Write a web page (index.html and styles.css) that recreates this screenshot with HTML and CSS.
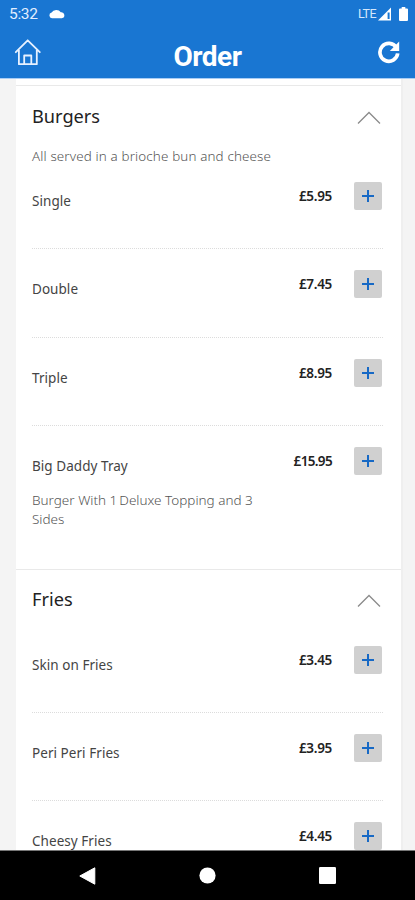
FILE: index.html
```html
<!DOCTYPE html>
<html lang="en">
<head>
<meta charset="utf-8">
<title>Order</title>
<link rel="stylesheet" href="styles.css">
</head>
<body>
<header class="header">
  <div class="status">
    <span class="time">5:32</span>
    <svg class="cloud" width="16" height="10" viewBox="0 0 16 10"><path d="M3 9.2A2.9 2.9 0 0 1 2.6 3.5A5.2 4.6 0 0 1 11.8 3.2A3 3 0 0 1 12.8 9.2Z" fill="#fff"/></svg>
    <span class="lte">LTE</span>
    <svg class="signal" width="14" height="14" viewBox="0 0 14 14"><path d="M0 13.5L13 .5V13.5Z" fill="#fff"/><path d="M9.6 5.5H11.6V12H9.6Z" fill="#1976d2"/></svg>
    <svg class="battery" width="9" height="14" viewBox="0 0 9 14"><path d="M2.7 0H6.3V1.5H8Q9 1.5 9 2.5V13Q9 14 8 14H1Q0 14 0 13V2.5Q0 1.5 1 1.5H2.7Z" fill="#fff"/></svg>
  </div>
  <div class="toolbar">
    <svg class="home" width="28" height="28" viewBox="0 0 28 28" fill="none" stroke="#e7f1ff" stroke-width="1.8" stroke-linejoin="round" stroke-linecap="round"><path d="M1.8 14.2L13.7 2.3L25.8 14.2M4.9 12V26.2H22.8V12M10.2 26V17.5H17.3V26"/></svg>
    <h1 class="title">Order</h1>
    <svg class="refresh" width="24" height="24" viewBox="0 0 24 24"><path d="M19.4 7.6A8.9 8.9 0 1 0 20.7 13.4" fill="none" stroke="#fff" stroke-width="3.7"/><path d="M22.2 1.6V11H12.8Z" fill="#fff"/></svg>
  </div>
</header>
<main class="menu">
  <section class="section">
    <div class="section-head"><h2>Burgers</h2><svg class="chevron" width="24" height="14" viewBox="0 0 24 14"><path d="M1 12.5L12 1.5L23 12.5"/></svg></div>
    <p class="intro">All served in a brioche bun and cheese</p>
    <article class="item"><div class="info"><h3>Single</h3></div><span class="price">£5.95</span><button class="add" aria-label="Add"></button></article>
    <article class="item"><div class="info"><h3>Double</h3></div><span class="price">£7.45</span><button class="add" aria-label="Add"></button></article>
    <article class="item"><div class="info"><h3>Triple</h3></div><span class="price">£8.95</span><button class="add" aria-label="Add"></button></article>
    <article class="item tall"><div class="info"><h3>Big Daddy Tray</h3><p class="detail"><span class="detail-line">Burger With <span class="one">1</span> Deluxe Topping and 3</span> Sides</p></div><span class="price wide">£15.95</span><button class="add" aria-label="Add"></button></article>
  </section>
  <section class="section">
    <div class="section-head"><h2>Fries</h2><svg class="chevron" width="24" height="14" viewBox="0 0 24 14"><path d="M1 12.5L12 1.5L23 12.5"/></svg></div>
    <article class="item"><div class="info"><h3>Skin on Fries</h3></div><span class="price">£3.45</span><button class="add" aria-label="Add"></button></article>
    <article class="item"><div class="info"><h3>Peri Peri Fries</h3></div><span class="price">£3.95</span><button class="add" aria-label="Add"></button></article>
    <article class="item"><div class="info"><h3>Cheesy Fries</h3></div><span class="price">£4.45</span><button class="add" aria-label="Add"></button></article>
  </section>
</main>
<nav class="navbar">
  <svg width="17" height="18" viewBox="0 0 17 18"><path d="M.8 9L15.8 .8V17.2Z" fill="#fff" stroke="#fff" stroke-linejoin="round"/></svg>
  <svg width="17" height="17" viewBox="0 0 17 17"><circle cx="8.5" cy="8.5" r="8.1" fill="#fff"/></svg>
  <svg width="17" height="17" viewBox="0 0 17 17"><rect width="17" height="17" rx="1.3" fill="#fff"/></svg>
</nav>
</body>
</html>
```
FILE: styles.css
```css
* { box-sizing: border-box; margin: 0; padding: 0; }
body { width: 415px; height: 900px; overflow: hidden; display: flex; flex-direction: column; background: #f4f4f4; font-family: "Noto Sans", sans-serif; }
svg { display: block; flex: none; }

.header { height: 79px; flex: none; background: #1976d2; border-bottom: 1px solid #a9cdf5; color: #fff; font-family: Roboto, sans-serif; }
.status { height: 27px; display: flex; align-items: center; padding: 0 7px 0 9px; }
.time { font-size: 15.5px; letter-spacing: -.3px; color: #e2efff; width: 40px; padding-top: 1px; }
.lte { margin-left: auto; font-size: 12.5px; letter-spacing: -.5px; color: #d5e7fc; }
.signal { margin-left: 2px; }
.battery { margin-left: 7px; }
.toolbar { height: 51px; display: flex; justify-content: space-between; padding: 11px 14px 0; }
.title { font-size: 28px; line-height: 38px; font-weight: 700; letter-spacing: -.5px; margin-left: -4px; }
.refresh { margin-top: 2px; }

.menu { flex: 1; min-height: 0; overflow: hidden; margin: 0 12px 0 16px; padding-top: 6px; background: #fff; border-right: 2px solid #efefef; }
.section { border-top: 1px solid #e9e9e9; padding: 0 18px 0 16px; }
.section-head { height: 55px; display: flex; justify-content: space-between; padding-top: 18px; }
.section + .section .section-head { padding-top: 17px; }
h2 { font-size: 18.2px; line-height: 25px; font-weight: 400; color: #222; }
.chevron { margin-top: 7px; margin-right: 2px; fill: none; stroke: #8b8b8b; stroke-width: 1.3; }
.intro { height: 20px; font-size: 13.4px; letter-spacing: .14px; line-height: 30px; font-weight: 300; color: #555; white-space: nowrap; }
.item { height: 88.3px; display: flex; align-items: flex-start; padding-top: 21px; border-bottom: 1px dotted #dcdcdc; }
.item.tall { height: 143px; border-bottom: 0; }
.info { flex: 1; }
h3 { margin-top: 9px; font-size: 13.5px; letter-spacing: .05px; line-height: 21px; font-weight: 400; color: #444; }
.detail { margin-top: 14px; font-size: 13.5px; line-height: 19.5px; font-weight: 300; color: #555; }
.detail-line { display: block; white-space: nowrap; }
.one { letter-spacing: -1.5px; }
.price { width: 70px; text-align: right; font-size: 13.5px; line-height: 28px; font-weight: 600; letter-spacing: -.3px; color: #222; }
.price.wide { letter-spacing: -.65px; }
.add { width: 28px; height: 28px; flex: none; margin: 0 1px 0 22px; border: 0; border-radius: 2px; background: linear-gradient(#1769c5, #1769c5) center / 12px 2px no-repeat, linear-gradient(#1769c5, #1769c5) center / 2px 12px no-repeat, #d0d0d0; }

.navbar { height: 50px; flex: none; background: #000; border-top: 1px solid #777; display: flex; align-items: center; justify-content: space-between; padding: 0 79px; }
```
